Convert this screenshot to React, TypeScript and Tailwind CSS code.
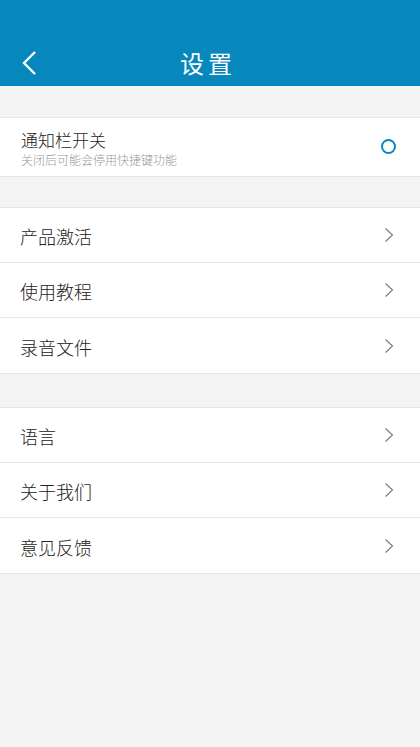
const FONT = {
  fontFamily: '"Noto Sans CJK SC", "Noto Sans", sans-serif',
};

function Chevron() {
  return (
    <svg width="10" height="16" viewBox="0 0 10 16" fill="none">
      <path d="M1.5 1.5 L8.5 8 L1.5 14.5" stroke="#777" strokeWidth="1.1" />
    </svg>
  );
}

function Row({ label, last }: { label: string; last?: boolean }) {
  return (
    <div
      className={`flex h-[55px] items-center justify-between bg-white pl-[20px] pr-[26px] ${
        last ? "" : "border-b border-[#e6e6e6]"
      }`}
    >
      <span className="pt-[3px] text-[18px] font-light text-[#222]">{label}</span>
      <Chevron />
    </div>
  );
}

function Group({ items }: { items: string[] }) {
  return (
    <div className="border-y border-[#e6e6e6]">
      {items.map((t, i) => (
        <Row key={t} label={t} last={i === items.length - 1} />
      ))}
    </div>
  );
}

export default function App() {
  return (
    <div className="flex min-h-[747px] flex-col bg-[#f4f4f4]" style={FONT}>
      <div className="relative flex h-[86px] items-end justify-center bg-[#0788bd] pb-[5px]">
        <svg
          className="absolute left-[20px] top-[50px]"
          width="18"
          height="26"
          viewBox="0 0 18 26"
          fill="none"
        >
          <path d="M15 2 L4 13 L15 24" stroke="white" strokeWidth="2.4" />
        </svg>
        <span className="pr-[4px] text-[24px] tracking-[4px] text-white">设置</span>
      </div>

      <div className="mt-[31px] border-y border-[#e6e6e6] bg-white">
        <div className="flex h-[58px] items-center justify-between pl-[21px] pr-[24px]">
          <div className="flex flex-col pt-[4px]">
            <span className="text-[17px] font-light leading-[22px] text-[#222]">通知栏开关</span>
            <span className="text-[12px] font-light leading-[18px] text-[#999]">关闭后可能会停用快捷键功能</span>
          </div>
          <div className="mb-[2px] h-[15px] w-[15px] rounded-full border-2 border-[#0788bd]" />
        </div>
      </div>

      <div className="mt-[30px]">
        <Group items={["产品激活", "使用教程", "录音文件"]} />
      </div>

      <div className="mt-[33px]">
        <Group items={["语言", "关于我们", "意见反馈"]} />
      </div>
    </div>
  );
}
